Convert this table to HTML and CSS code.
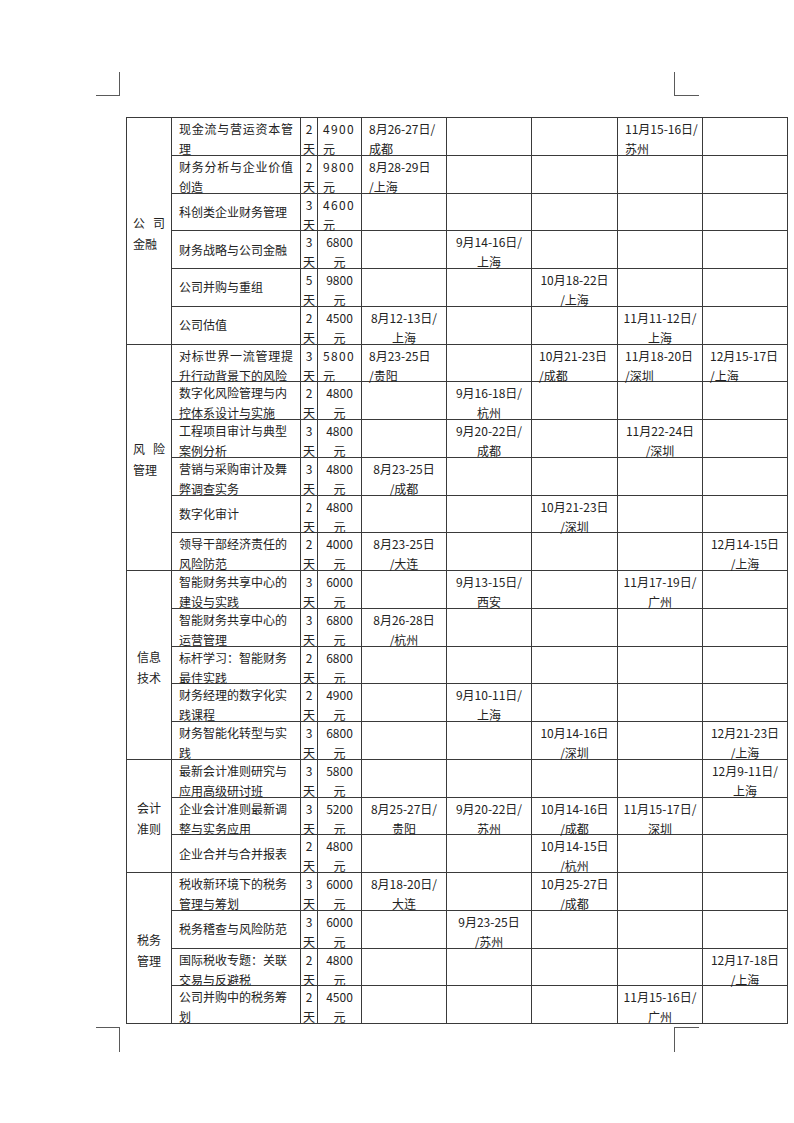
FILE: index.html
```html
<!DOCTYPE html>
<html lang="zh-CN">
<head>
<meta charset="utf-8">
<title>课程安排表</title>
<link rel="stylesheet" href="styles.css">
</head>
<body>
<div class="page">
  <div class="marks">
    <span class="mk tl"></span>
    <span class="mk tr"></span>
  </div>

  <div class="tbl">
    <!-- 公司金融 -->
    <div class="c cat g6"><div class="ct wide"><span class="ls">公</span>司<br>金融</div></div>

    <div class="c nm"><span class="sp">现金流与营运资本管</span><br>理</div><div class="c dy">2<br>天</div><div class="c pr l">4900<br>元</div>
    <div class="c dt l">8月26-27日/<br>成都</div><div class="c dt"></div><div class="c dt"></div><div class="c dt l">11月15-16日/<br>苏州</div><div class="c dt"></div>

    <div class="c nm"><span class="sp">财务分析与企业价值</span><br>创造</div><div class="c dy">2<br>天</div><div class="c pr l">9800<br>元</div>
    <div class="c dt l">8月28-29日<br>/上海</div><div class="c dt"></div><div class="c dt"></div><div class="c dt"></div><div class="c dt"></div>

    <div class="c nm mid">科创类企业财务管理</div><div class="c dy">3<br>天</div><div class="c pr l">4600<br>元</div>
    <div class="c dt"></div><div class="c dt"></div><div class="c dt"></div><div class="c dt"></div><div class="c dt"></div>

    <div class="c nm mid">财务战略与公司金融</div><div class="c dy">3<br>天</div><div class="c pr">6800<br>元</div>
    <div class="c dt"></div><div class="c dt">9月14-16日/<br>上海</div><div class="c dt"></div><div class="c dt"></div><div class="c dt"></div>

    <div class="c nm mid">公司并购与重组</div><div class="c dy">5<br>天</div><div class="c pr">9800<br>元</div>
    <div class="c dt"></div><div class="c dt"></div><div class="c dt">10月18-22日<br>/上海</div><div class="c dt"></div><div class="c dt"></div>

    <div class="c nm mid">公司估值</div><div class="c dy">2<br>天</div><div class="c pr">4500<br>元</div>
    <div class="c dt">8月12-13日/<br>上海</div><div class="c dt"></div><div class="c dt"></div><div class="c dt">11月11-12日/<br>上海</div><div class="c dt"></div>

    <!-- 风险管理 -->
    <div class="c cat g6"><div class="ct wide"><span class="ls">风</span>险<br>管理</div></div>

    <div class="c nm"><span class="sp">对标世界一流管理提</span><br>升行动背景下的风险</div><div class="c dy">3<br>天</div><div class="c pr l">5800<br>元</div>
    <div class="c dt l">8月23-25日<br>/贵阳</div><div class="c dt"></div><div class="c dt l">10月21-23日<br>/成都</div><div class="c dt l">11月18-20日<br>/深圳</div><div class="c dt l">12月15-17日<br>/上海</div>

    <div class="c nm">数字化风险管理与内<br>控体系设计与实施</div><div class="c dy">2<br>天</div><div class="c pr">4800<br>元</div>
    <div class="c dt"></div><div class="c dt">9月16-18日/<br>杭州</div><div class="c dt"></div><div class="c dt"></div><div class="c dt"></div>

    <div class="c nm">工程项目审计与典型<br>案例分析</div><div class="c dy">3<br>天</div><div class="c pr">4800<br>元</div>
    <div class="c dt"></div><div class="c dt">9月20-22日/<br>成都</div><div class="c dt"></div><div class="c dt">11月22-24日<br>/深圳</div><div class="c dt"></div>

    <div class="c nm">营销与采购审计及舞<br>弊调查实务</div><div class="c dy">3<br>天</div><div class="c pr">4800<br>元</div>
    <div class="c dt">8月23-25日<br>/成都</div><div class="c dt"></div><div class="c dt"></div><div class="c dt"></div><div class="c dt"></div>

    <div class="c nm mid">数字化审计</div><div class="c dy">2<br>天</div><div class="c pr">4800<br>元</div>
    <div class="c dt"></div><div class="c dt"></div><div class="c dt">10月21-23日<br>/深圳</div><div class="c dt"></div><div class="c dt"></div>

    <div class="c nm">领导干部经济责任的<br>风险防范</div><div class="c dy">2<br>天</div><div class="c pr">4000<br>元</div>
    <div class="c dt">8月23-25日<br>/大连</div><div class="c dt"></div><div class="c dt"></div><div class="c dt"></div><div class="c dt">12月14-15日<br>/上海</div>

    <!-- 信息技术 -->
    <div class="c cat g5"><div class="ct">信息<br>技术</div></div>

    <div class="c nm">智能财务共享中心的<br>建设与实践</div><div class="c dy">3<br>天</div><div class="c pr">6000<br>元</div>
    <div class="c dt"></div><div class="c dt">9月13-15日/<br>西安</div><div class="c dt"></div><div class="c dt">11月17-19日/<br>广州</div><div class="c dt"></div>

    <div class="c nm">智能财务共享中心的<br>运营管理</div><div class="c dy">3<br>天</div><div class="c pr">6800<br>元</div>
    <div class="c dt">8月26-28日<br>/杭州</div><div class="c dt"></div><div class="c dt"></div><div class="c dt"></div><div class="c dt"></div>

    <div class="c nm">标杆学习：智能财务<br>最佳实践</div><div class="c dy">2<br>天</div><div class="c pr">6800<br>元</div>
    <div class="c dt"></div><div class="c dt"></div><div class="c dt"></div><div class="c dt"></div><div class="c dt"></div>

    <div class="c nm">财务经理的数字化实<br>践课程</div><div class="c dy">2<br>天</div><div class="c pr">4900<br>元</div>
    <div class="c dt"></div><div class="c dt">9月10-11日/<br>上海</div><div class="c dt"></div><div class="c dt"></div><div class="c dt"></div>

    <div class="c nm">财务智能化转型与实<br>践</div><div class="c dy">3<br>天</div><div class="c pr">6800<br>元</div>
    <div class="c dt"></div><div class="c dt"></div><div class="c dt">10月14-16日<br>/深圳</div><div class="c dt"></div><div class="c dt">12月21-23日<br>/上海</div>

    <!-- 会计准则 -->
    <div class="c cat g3"><div class="ct">会计<br>准则</div></div>

    <div class="c nm">最新会计准则研究与<br>应用高级研讨班</div><div class="c dy">3<br>天</div><div class="c pr">5800<br>元</div>
    <div class="c dt"></div><div class="c dt"></div><div class="c dt"></div><div class="c dt"></div><div class="c dt">12月9-11日/<br>上海</div>

    <div class="c nm">企业会计准则最新调<br>整与实务应用</div><div class="c dy">3<br>天</div><div class="c pr">5200<br>元</div>
    <div class="c dt">8月25-27日/<br>贵阳</div><div class="c dt">9月20-22日/<br>苏州</div><div class="c dt">10月14-16日<br>/成都</div><div class="c dt">11月15-17日/<br>深圳</div><div class="c dt"></div>

    <div class="c nm mid">企业合并与合并报表</div><div class="c dy">2<br>天</div><div class="c pr">4800<br>元</div>
    <div class="c dt"></div><div class="c dt"></div><div class="c dt">10月14-15日<br>/杭州</div><div class="c dt"></div><div class="c dt"></div>

    <!-- 税务管理 -->
    <div class="c cat g4"><div class="ct">税务<br>管理</div></div>

    <div class="c nm">税收新环境下的税务<br>管理与筹划</div><div class="c dy">3<br>天</div><div class="c pr">6000<br>元</div>
    <div class="c dt">8月18-20日/<br>大连</div><div class="c dt"></div><div class="c dt">10月25-27日<br>/成都</div><div class="c dt"></div><div class="c dt"></div>

    <div class="c nm mid">税务稽查与风险防范</div><div class="c dy">3<br>天</div><div class="c pr">6000<br>元</div>
    <div class="c dt"></div><div class="c dt">9月23-25日<br>/苏州</div><div class="c dt"></div><div class="c dt"></div><div class="c dt"></div>

    <div class="c nm">国际税收专题：关联<br>交易与反避税</div><div class="c dy">2<br>天</div><div class="c pr">4800<br>元</div>
    <div class="c dt"></div><div class="c dt"></div><div class="c dt"></div><div class="c dt"></div><div class="c dt">12月17-18日<br>/上海</div>

    <div class="c nm">公司并购中的税务筹<br>划</div><div class="c dy">2<br>天</div><div class="c pr">4500<br>元</div>
    <div class="c dt"></div><div class="c dt"></div><div class="c dt"></div><div class="c dt">11月15-16日/<br>广州</div><div class="c dt"></div>
  </div>

  <div class="marks bottom">
    <span class="mk bl"></span>
    <span class="mk br"></span>
  </div>
</div>
</body>
</html>
```

FILE: styles.css
```css
html, body {
  margin: 0;
  padding: 0;
  background: #ffffff;
}

body {
  font-family: "Noto Sans CJK SC", "Noto Sans", sans-serif;
  font-size: 12px;
  color: #222222;
}

.page {
  width: 794px;
  height: 1123px;
  padding-top: 72px;
  box-sizing: border-box;
}

.marks {
  display: flex;
  justify-content: space-between;
  margin-left: 96px;
  width: 603px;
  height: 24px;
}

.mk {
  display: block;
  box-sizing: border-box;
  height: 24px;
  border-color: #5a5a5a;
  border-style: solid;
  border-width: 0;
}

.mk.tl { width: 24px; border-right-width: 1.5px; border-bottom-width: 1.5px; }
.mk.tr { width: 25px; border-left-width: 1.5px; border-bottom-width: 1.5px; }

.marks.bottom {
  margin-top: 3px;
  height: 25px;
}

.mk.bl { width: 24px; height: 25px; border-right-width: 1.5px; border-top-width: 1.5px; }
.mk.br { width: 25px; height: 25px; border-left-width: 1.5px; border-top-width: 1.5px; }

.tbl {
  margin-top: 21px;
  margin-left: 126px;
  width: 662px;
  box-sizing: border-box;
  display: grid;
  grid-template-columns: 45px 129px 17px 44px 85px 85px 86px 85px 85px;
  grid-auto-rows: 37.75px;
  border-top: 1px solid #3a3a3a;
  border-left: 1px solid #3a3a3a;
}

.c {
  box-sizing: border-box;
  border-right: 1px solid #3a3a3a;
  border-bottom: 1px solid #3a3a3a;
  padding-top: 1px;
  line-height: 20px;
  white-space: nowrap;
  min-width: 0;
}

.cat {
  display: flex;
  align-items: center;
  justify-content: center;
  line-height: 21px;
  padding-top: 0;
}

.g6 { grid-row: span 6; }
.g5 { grid-row: span 5; }
.g4 { grid-row: span 4; }
.g3 { grid-row: span 3; }

.ct {
  width: 24px;
  text-align: left;
  padding-top: 4px;
}

.ct.wide {
  width: 32px;
}

.ls {
  letter-spacing: 8px;
}

.nm {
  padding-left: 7px;
  text-align: left;
}

.nm.mid {
  display: flex;
  align-items: center;
  padding-top: 0;
}

.sp {
  letter-spacing: 0.75px;
}

.dy {
  text-align: center;
  overflow: visible;
}

.pr {
  text-align: center;
}

.pr.l {
  text-align: left;
  padding-left: 5px;
  letter-spacing: 1.3px;
}

.dt {
  text-align: center;
}

.dt.l {
  text-align: left;
  padding-left: 7px;
}
```
